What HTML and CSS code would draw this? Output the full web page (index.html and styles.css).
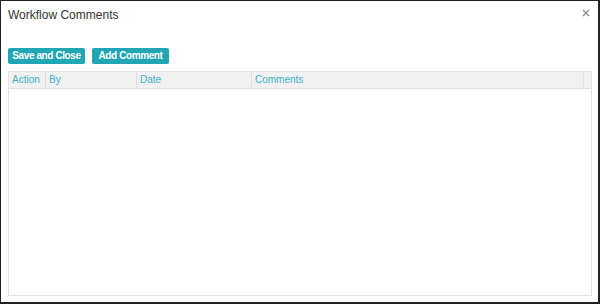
FILE: index.html
```html
<!DOCTYPE html>
<html lang="en">
<head>
    <meta charset="UTF-8" />
    <title>Workflow Comments</title>
    <link rel="stylesheet" href="styles.css">
</head>
<body>
    <div class="dialog">
        <div class="dialog-head">
            <h1>Workflow Comments</h1>
            <svg class="close" width="8" height="8" viewBox="0 0 8 8">
                <path d="M1 1 L7 7 M7 1 L1 7" stroke="#8c8c8c" stroke-width="1.4" fill="none" />
            </svg>
        </div>
        <div class="toolbar">
            <button class="btn">Save and Close</button>
            <button class="btn">Add Comment</button>
        </div>
        <div class="grid">
            <div class="grid-head">
                <div class="col col-action">Action</div>
                <div class="col col-by">By</div>
                <div class="col col-date">Date</div>
                <div class="col col-comments">Comments</div>
                <div class="col col-scroll"></div>
            </div>
            <div class="grid-body"></div>
        </div>
    </div>
</body>
</html>
```

FILE: styles.css
```css
body {
    margin: 0;
    font-family: 'Liberation Sans', Arial, sans-serif;
    background-color: #ffffff;
}

.dialog {
    box-sizing: border-box;
    width: 600px;
    height: 304px;
    border: 1px solid #222;
    border-right-width: 2px;
    border-bottom-width: 2px;
    padding: 0 6px 6px 7px;
    display: flex;
    flex-direction: column;
    background: #fff;
}

.dialog-head {
    display: flex;
    justify-content: space-between;
    align-items: flex-start;
    height: 47px;
}

    .dialog-head h1 {
        margin: 7px 0 0 0;
        font-size: 12px;
        font-weight: 400;
        color: #333;
    }

.close {
    margin: 8px 2px 0 0;
}

.toolbar {
    display: flex;
    gap: 7px;
    margin-bottom: 7px;
}

.btn {
    background-color: #22a6b6;
    color: #fff;
    border: none;
    border-radius: 2px;
    width: 77px;
    height: 16px;
    padding: 0;
    font-family: 'Liberation Sans', Arial, sans-serif;
    font-size: 10px;
    font-weight: 700;
    letter-spacing: -0.4px;
    line-height: 16px;
    text-align: center;
    white-space: nowrap;
}

.grid {
    flex: 1;
    border: 1px solid #e2e2e2;
    display: flex;
    flex-direction: column;
}

.grid-head {
    display: flex;
    height: 16px;
    background-color: #f1f1f1;
    border-bottom: 1px solid #dcdcdc;
}

    .grid-head .col {
        box-sizing: border-box;
        padding-left: 3px;
        font-size: 10px;
        line-height: 16px;
        color: #3bb0c6;
        border-right: 1px solid #e0e0e0;
        white-space: nowrap;
    }

.col-action { width: 37px; }
.col-by { width: 91px; }
.col-date { width: 115px; }
.col-comments { flex: 1; }
.col-scroll { width: 7px; border-right: none !important; }

.grid-body {
    flex: 1;
}
```
